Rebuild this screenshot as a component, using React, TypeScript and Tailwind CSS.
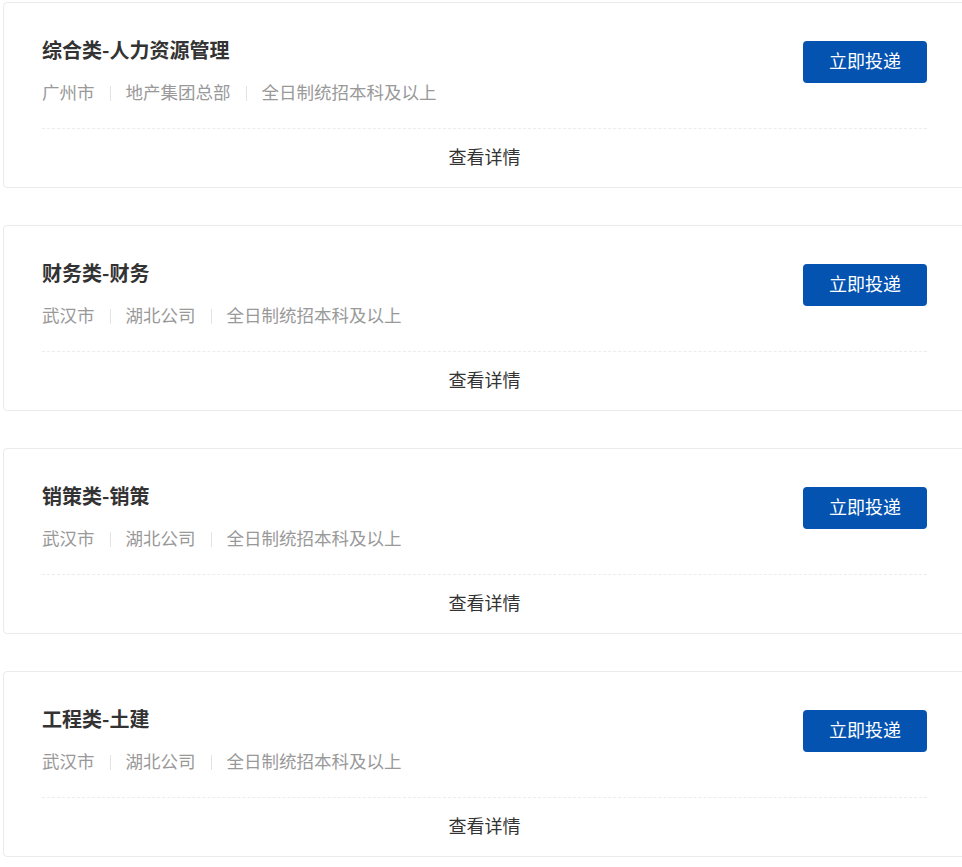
const jobs = [
  { title: "综合类-人力资源管理", city: "广州市", dept: "地产集团总部", edu: "全日制统招本科及以上" },
  { title: "财务类-财务", city: "武汉市", dept: "湖北公司", edu: "全日制统招本科及以上" },
  { title: "销策类-销策", city: "武汉市", dept: "湖北公司", edu: "全日制统招本科及以上" },
  { title: "工程类-土建", city: "武汉市", dept: "湖北公司", edu: "全日制统招本科及以上" },
];

function Divider() {
  return <span className="mx-[15px] mt-[2px] h-[15px] w-px bg-[#e3e3e3]" />;
}

function JobCard({ job }: { job: (typeof jobs)[number] }) {
  return (
    <div className="flex h-[186px] w-[963px] shrink-0 flex-col rounded-[4px] border border-[#ebebeb] bg-white px-[38px]">
      <div className="flex items-start justify-between border-b border-dashed border-[#ececec] pt-[33px] pb-[22px]">
        <div>
          <h3 className="text-[20px] leading-[28px] font-bold text-[#333]">{job.title}</h3>
          <div className="mt-[14px] flex items-center text-[17.5px] leading-[28px] text-[#999]">
            <span>{job.city}</span>
            <Divider />
            <span>{job.dept}</span>
            <Divider />
            <span>{job.edu}</span>
          </div>
        </div>
        <button className="mt-[5px] h-[42px] w-[124px] rounded-[4px] bg-[#0553b0] pb-[3px] text-[18px] text-white">
          立即投递
        </button>
      </div>
      <div className="flex flex-1 items-center justify-center pb-[4px] text-[18px] text-[#333]">
        <a href="#">查看详情</a>
      </div>
    </div>
  );
}

export default function App() {
  return (
    <div
      className="min-h-screen w-full overflow-hidden bg-white pt-[2px] pl-[3px]"
      style={{ fontFamily: '"Noto Sans CJK SC", "Noto Sans", sans-serif' }}
    >
      <div className="flex flex-col gap-[37px]">
        {jobs.map((job) => (
          <JobCard key={job.title} job={job} />
        ))}
      </div>
    </div>
  );
}
